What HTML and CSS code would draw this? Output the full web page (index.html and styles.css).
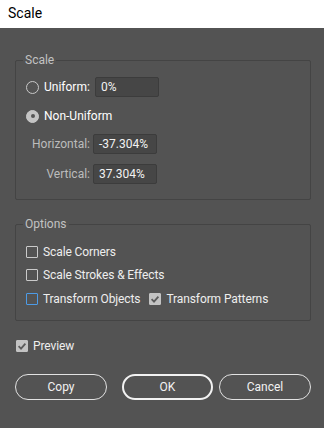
FILE: index.html
```html
<!DOCTYPE html>
<html>
<head>
<meta charset="utf-8">
<link rel="stylesheet" href="styles.css">
</head>
<body>
<div class="titlebar">Scale</div>
<div class="dialog">
  <fieldset class="group group-scale">
    <legend>Scale</legend>
    <div class="group-body">
      <div class="row row-uniform">
        <span class="radio"></span>
        <span class="strong-label">Uniform:</span>
        <span class="field">0%</span>
      </div>
      <div class="row row-nonuniform">
        <span class="radio radio-on"></span>
        <span class="strong-label">Non-Uniform</span>
      </div>
      <div class="row row-horizontal">
        <span class="field-label">Horizontal:</span>
        <span class="field">-37.304%</span>
      </div>
      <div class="row row-vertical">
        <span class="field-label">Vertical:</span>
        <span class="field">37.304%</span>
      </div>
    </div>
  </fieldset>
  <fieldset class="group group-options">
    <legend>Options</legend>
    <div class="group-body options-body">
      <div class="row check-row">
        <span class="check"></span>
        <span class="opt-label">Scale Corners</span>
      </div>
      <div class="row check-row">
        <span class="check"></span>
        <span class="opt-label">Scale Strokes &amp; Effects</span>
      </div>
      <div class="row check-row">
        <span class="check check-focus"></span>
        <span class="opt-label">Transform Objects</span>
        <span class="check check-on spaced">
          <svg viewBox="0 0 12 12" width="12" height="12"><path d="M2.6 6.2 L5 8.6 L9.4 3.6" fill="none" stroke="#5b5b5b" stroke-width="1.8"/></svg>
        </span>
        <span class="opt-label">Transform Patterns</span>
      </div>
    </div>
  </fieldset>
  <div class="row preview-row">
    <span class="check check-on">
      <svg viewBox="0 0 12 12" width="12" height="12"><path d="M2.6 6.2 L5 8.6 L9.4 3.6" fill="none" stroke="#5b5b5b" stroke-width="1.8"/></svg>
    </span>
    <span class="opt-label">Preview</span>
  </div>
  <div class="buttons">
    <button class="btn">Copy</button>
    <button class="btn btn-default">OK</button>
    <button class="btn">Cancel</button>
  </div>
</div>
</body>
</html>
```
FILE: styles.css
```css
html, body {
  margin: 0;
  padding: 0;
  width: 324px;
  height: 428px;
  background: #535353;
  overflow: hidden;
  font-family: Roboto, "Noto Sans", "Liberation Sans", sans-serif;
}
.titlebar {
  height: 28px;
  background: #ffffff;
  color: #000;
  font-size: 14px;
  line-height: 27px;
  padding-left: 8px;
  box-sizing: border-box;
}
.dialog {
  padding: 24px 13px 0 15px;
}
.group {
  margin: 0;
  padding: 0;
  border: 1px solid #444444;
  border-radius: 2px;
  width: 296px;
  box-sizing: border-box;
  min-width: 0;
}
.group legend {
  margin-left: 7px;
  padding: 0 2px;
  font-size: 12px;
  line-height: 16px;
  color: #c2c2c2;
}
.group-options {
  margin-top: 16px;
}
.group-body {
  padding: 9px 10px 15px 10px;
  display: flex;
  flex-direction: column;
}
.row {
  display: flex;
  align-items: center;
  font-size: 12px;
  color: #efefef;
}
.row-uniform { height: 20px; }
.row-nonuniform { height: 20px; margin-top: 9px; }
.row-horizontal { height: 20px; margin-top: 8px; }
.row-vertical { height: 20px; margin-top: 10px; }
.radio {
  width: 11px;
  height: 11px;
  border: 1px solid #c9c9c9;
  border-radius: 50%;
  flex: none;
  position: relative;
}
.radio-on {
  background: #c4c4c4;
}
.radio-on::after {
  content: "";
  position: absolute;
  left: 3.5px;
  top: 3.5px;
  width: 4px;
  height: 4px;
  border-radius: 50%;
  background: #555555;
}
.strong-label {
  margin-left: 5px;
  color: #ffffff;
  font-weight: 400;
}
.row-uniform .strong-label {
  width: 51px;
}
.field {
  width: 64px;
  height: 20px;
  box-sizing: border-box;
  background: #464646;
  border: 1px solid #3c3c3c;
  border-radius: 2px;
  line-height: 18px;
  padding-left: 5px;
  color: #f2f2f2;
  font-size: 12px;
}
.field-label {
  width: 64px;
  text-align: right;
  margin-right: 3px;
  color: #bcbcbc;
}
.options-body {
  padding: 12px 10px 13px 10px;
}
.check-row {
  height: 16px;
}
.check-row + .check-row {
  margin-top: 7px;
}
.check-row:last-child {
  margin-top: 8px;
}
.check {
  width: 12px;
  height: 12px;
  box-sizing: border-box;
  border: 1px solid #cacaca;
  border-radius: 1px;
  flex: none;
  display: flex;
}
.check svg { display: block; }
.check-focus {
  border-color: #4d9be6;
}
.check-on {
  background: #c3c3c3;
  border-color: #c3c3c3;
}
.check-on svg {
  margin: -1px;
}
.spaced {
  margin-left: 9px;
}
.opt-label {
  margin-left: 5px;
  color: #eeeeee;
  letter-spacing: -0.1px;
}
.preview-row {
  height: 16px;
  margin-top: 17px;
  margin-left: 1px;
}
.buttons {
  display: flex;
  margin-top: 20px;
}
.btn {
  width: 92px;
  height: 26px;
  box-sizing: border-box;
  border: 1px solid #e2e2e2;
  border-radius: 13px;
  background: transparent;
  color: #f2f2f2;
  font-family: inherit;
  font-size: 12px;
  padding: 0;
  margin: 0;
}
.btn-default {
  border-width: 2px;
  border-color: #f2f2f2;
  margin-left: 15px;
  width: 91px;
}
.btn-default + .btn {
  margin-left: 6px;
}
```
